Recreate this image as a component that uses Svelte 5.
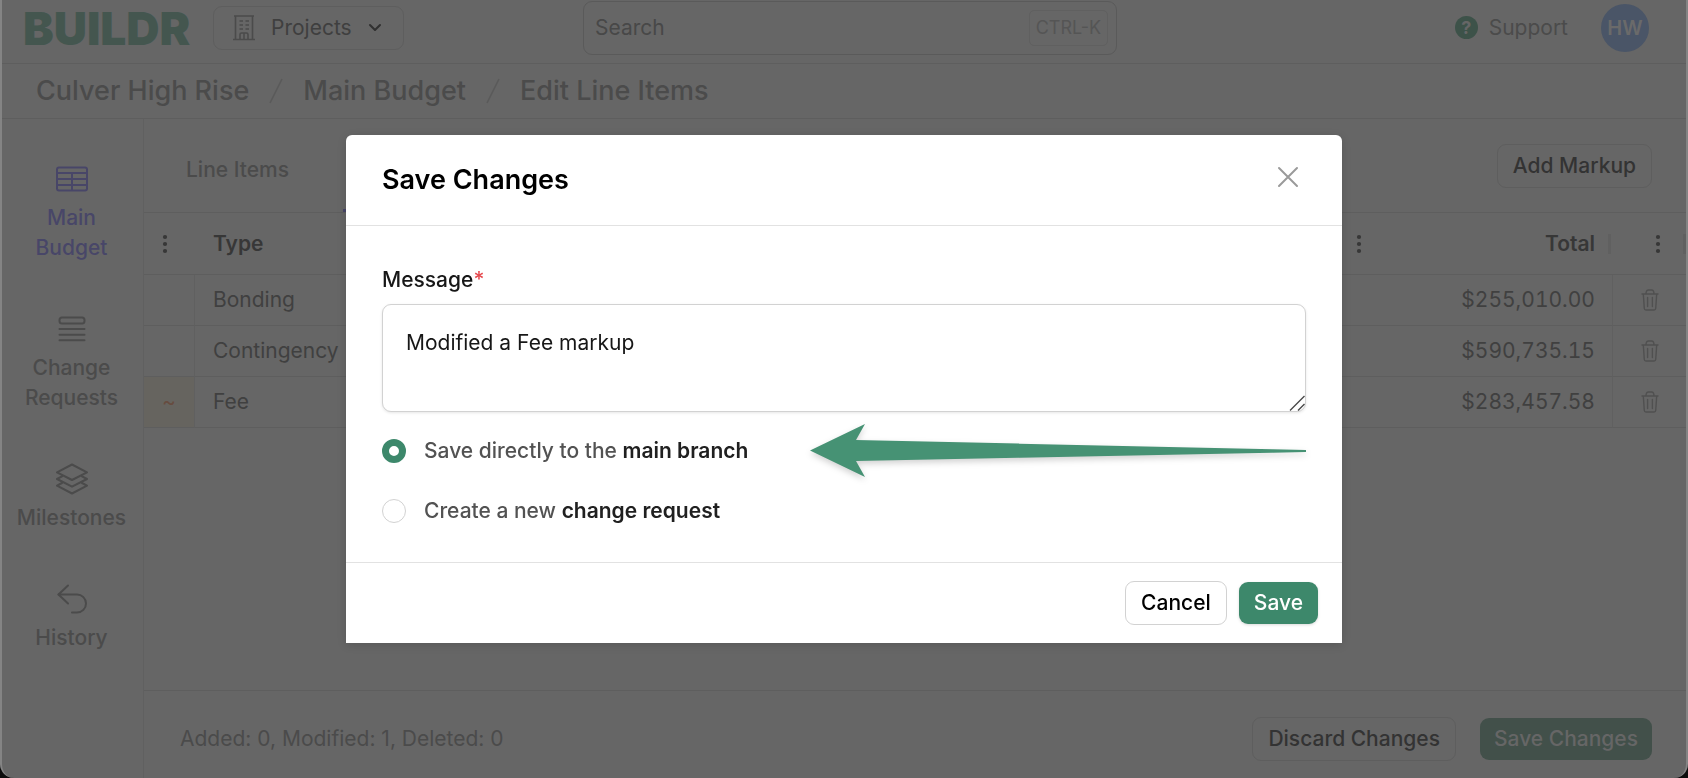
<script>
  let message = $state('Modified a Fee markup');
  let target = $state('main');

  const crumbs = ['Culver High Rise', 'Main Budget', 'Edit Line Items'];
  const rows = [
    { mark: '', type: 'Bonding', total: '$255,010.00' },
    { mark: '', type: 'Contingency', total: '$590,735.15' },
    { mark: '~', type: 'Fee', total: '$283,457.58' }
  ];
</script>

{#snippet dots()}
  <svg class="dots" width="6" height="20" viewBox="0 0 6 20" fill="currentColor" aria-hidden="true">
    <circle cx="3" cy="3" r="2.1" /><circle cx="3" cy="10" r="2.1" /><circle cx="3" cy="17" r="2.1" />
  </svg>
{/snippet}

<div class="page">
  <header>
    <a class="logo" href="#home">BUILDR</a>
    <button class="btn projects">
      <svg width="24" height="26" viewBox="0 0 24 26" fill="none" stroke="#4b4b4b" stroke-width="1.6" aria-hidden="true">
        <path d="M2 1h20M1 24.500h22M3.500 1v23.500M20.500 1v23.500M8 24v-4.500q0-1.500 1.500-1.500h5q1.500 0 1.500 1.500v4.500M12 18v6" />
        <path d="M7.500 6h3.500M13.500 6h3.500M7.500 10h3.500M13.500 10h3.500M7.500 14h3.500M13.500 14h3.500" />
      </svg>
      <span>Projects</span>
      <svg width="14" height="10" viewBox="0 0 14 10" fill="none" stroke="#303030" stroke-width="2" stroke-linecap="round" stroke-linejoin="round" aria-hidden="true">
        <path d="M2 2l5 5 5-5" />
      </svg>
    </button>
    <label class="search">
      <input type="text" placeholder="Search" aria-label="Search" />
      <kbd>CTRL-K</kbd>
    </label>
    <div class="account">
      <a class="support" href="#support">
        <span class="help">?</span>
        Support
      </a>
      <button class="avatar">HW</button>
    </div>
  </header>

  <nav class="crumbs">
    {#each crumbs as crumb, i}
      {#if i > 0}
        <svg width="14" height="26" viewBox="0 0 14 26" fill="none" stroke="#5a5a5a" stroke-width="1.5" aria-hidden="true"><path d="M13 1L1 25" /></svg>
      {/if}
      <a href="#crumb">{crumb}</a>
    {/each}
  </nav>

  <div class="body">
    <nav class="side">
      <a class="current" href="#budget">
        <svg width="32" height="32" viewBox="0 0 32 32" fill="none" stroke="currentColor" stroke-width="2" aria-hidden="true">
          <rect x="1" y="4.500" width="30" height="23" rx="2" />
          <path d="M1 10h30M1 16h30M1 22h30M16 10v17.500" />
        </svg>
        Main Budget
      </a>
      <a href="#requests">
        <svg width="32" height="32" viewBox="0 0 32 32" fill="none" stroke="currentColor" stroke-width="2" stroke-linecap="round" aria-hidden="true">
          <rect x="3.500" y="4.500" width="25" height="6" rx="2.500" />
          <path d="M3.500 16h25M3.500 21.800h25M3.500 27.300h25" />
        </svg>
        Change Requests
      </a>
      <a href="#milestones">
        <svg width="32" height="32" viewBox="0 0 32 32" fill="none" stroke="currentColor" stroke-width="2" stroke-linejoin="round" stroke-linecap="round" aria-hidden="true">
          <path d="M16 1.500L31 9.300 16 17 1 9.300z" />
          <path d="M6 13.300L1 16l15 7.700L31 16l-5-2.700" />
          <path d="M6 20L1 22.700l15 7.800 15-7.800-5-2.700" />
        </svg>
        Milestones
      </a>
      <a href="#history">
        <svg width="32" height="32" viewBox="0 0 32 32" fill="none" stroke="currentColor" stroke-width="2" stroke-linejoin="round" stroke-linecap="round" aria-hidden="true">
          <path d="M12 2.500L2.500 11.500 12 20.500" />
          <path d="M2.500 11.500h18.500a9 9 0 0 1 0 18h-5" />
        </svg>
        History
      </a>
    </nav>

    <main>
      <div class="toolbar">
        <div class="tabs">
          <a href="#lines">Line Items</a>
          <span class="marker"></span>
        </div>
        <button class="btn">Add Markup</button>
      </div>
      <table>
        <thead>
          <tr>
            <th class="mark">{@render dots()}</th>
            <th class="type">Type</th>
            <th class="total"><div>{@render dots()}<span>Total</span></div></th>
            <th class="remove"><div>{@render dots()}</div></th>
          </tr>
        </thead>
        <tbody>
          {#each rows as row}
            <tr>
              <td class="mark" class:changed={row.mark}>{row.mark}</td>
              <td class="type">{row.type}</td>
              <td class="total">{row.total}</td>
              <td class="remove">
                <button aria-label="Delete">
                  <svg width="18" height="22" viewBox="0 0 18 22" fill="none" stroke="#505050" stroke-width="1.400" stroke-linecap="round" stroke-linejoin="round" aria-hidden="true">
                    <path d="M1 5h16M2.300 5l1 14.500q.1 1.500 1.600 1.500h8.200q1.500 0 1.600-1.500l1-14.500M5 5q0-4 2.500-4h3q2.500 0 2.500 4M6.600 8.500v9M11.400 8.500v9" />
                  </svg>
                </button>
              </td>
            </tr>
          {/each}
        </tbody>
      </table>
      <footer>
        <span>Added: 0, Modified: 1, Deleted: 0</span>
        <button class="btn">Discard Changes</button>
        <button class="btn green">Save Changes</button>
      </footer>
    </main>
  </div>
</div>

<div class="layer">
  <form class="dialog" role="dialog" aria-labelledby="dialog-title">
    <div class="head">
      <h2 id="dialog-title">Save Changes</h2>
      <button class="close" type="button" aria-label="Close">
        <svg width="22" height="22" viewBox="0 0 22 22" fill="none" stroke="#9a9a9a" stroke-width="2" stroke-linecap="round" aria-hidden="true">
          <path d="M2 2l18 18M20 2L2 20" />
        </svg>
      </button>
    </div>
    <div class="fields">
      <label class="caption" for="message">Message<span>*</span></label>
      <div class="box">
        <textarea id="message" bind:value={message}></textarea>
        <svg width="16" height="16" viewBox="0 0 16 16" fill="none" stroke="#4a4a4a" stroke-width="1.400" aria-hidden="true">
          <path d="M1 15.500L15.500 1M9 15.500L15.500 9" />
        </svg>
      </div>
      <div class="choice">
        <input type="radio" id="to-main" value="main" bind:group={target} />
        <label for="to-main">Save directly to the <b>main branch</b></label>
        <svg class="arrow" width="496" height="56" viewBox="0 0 496 56" fill="#469274" aria-hidden="true">
          <path d="M0 27.500L55 1 46 17 496 27v2L46 38l9 16z" />
        </svg>
      </div>
      <div class="choice">
        <input type="radio" id="to-request" value="request" bind:group={target} />
        <label for="to-request">Create a new <b>change request</b></label>
      </div>
    </div>
    <div class="actions">
      <button class="btn light" type="button">Cancel</button>
      <button class="btn primary" type="button">Save</button>
    </div>
  </form>
</div>

<style>
  :global(body) {
    margin: 0;
    background: #0c0c0c;
    font-family: Inter, 'Liberation Sans', sans-serif;
    font-size: 21px;
    line-height: 30px;
  }
  * {
    box-sizing: border-box;
  }
  a {
    color: inherit;
    text-decoration: none;
  }
  button,
  input,
  textarea {
    font: inherit;
    color: inherit;
  }
  svg {
    display: block;
    flex: none;
  }
  .page {
    display: flex;
    flex-direction: column;
    min-height: 100vh;
    background: #666;
    border: solid #848484;
    border-width: 0 2px;
    border-radius: 0 0 14px 14px;
    color: #4b4b4b;
  }
  .btn {
    height: 44px;
    padding: 0 15px;
    border: 1px solid #5e5e5e;
    border-radius: 9px;
    background: none;
    color: #333;
    font-weight: 500;
    white-space: nowrap;
  }
  .btn.green {
    height: 42px;
    padding: 0 14px;
    border: 0;
    background: #42504a;
    color: #666;
  }
  header {
    display: flex;
    align-items: center;
    height: 64px;
    padding: 0 37px 8px 21px;
    border-bottom: 1px solid #5e5e5e;
  }
  .logo {
    width: 190px;
    color: #44564f;
    font-size: 46px;
    font-weight: 900;
  }
  .projects {
    display: flex;
    align-items: center;
    gap: 15px;
    width: 191px;
    padding: 0 21px 0 18px;
    color: #3f3f3f;
    font-weight: 400;
  }
  .projects span {
    flex: 1;
    text-align: left;
  }
  .search {
    display: flex;
    align-items: center;
    flex: 0 1 534px;
    height: 54px;
    margin-left: 179px;
    padding: 0 8px 0 11px;
    border: 1px solid #5a5a5a;
    border-radius: 9px;
  }
  .search input {
    flex: 1;
    min-width: 0;
    padding: 0;
    border: 0;
    outline: 0;
    background: none;
  }
  .search input::placeholder {
    color: #484848;
    opacity: 1;
  }
  kbd {
    height: 36px;
    padding: 0 6px;
    border: 1px solid #606060;
    border-radius: 5px;
    color: #555;
    font-family: inherit;
    font-size: 18px;
    line-height: 34px;
  }
  .account {
    display: flex;
    align-items: center;
    gap: 33px;
    margin-left: auto;
  }
  .support {
    display: flex;
    align-items: center;
    gap: 11px;
  }
  .help {
    width: 23px;
    height: 23px;
    border-radius: 50%;
    background: #3d5249;
    color: #666;
    font-size: 18px;
    font-weight: 700;
    line-height: 23px;
    text-align: center;
  }
  .avatar {
    width: 48px;
    height: 48px;
    padding: 0;
    border: 0;
    border-radius: 50%;
    background: #4a5567;
    color: #6a6a6a;
    font-size: 20px;
    font-weight: 600;
  }
  .crumbs {
    display: flex;
    align-items: center;
    gap: 20px;
    height: 55px;
    padding: 0 34px;
    border-bottom: 1px solid #5e5e5e;
    font-size: 27px;
    font-weight: 500;
  }
  .body {
    display: flex;
    flex: 1;
  }
  .side {
    display: flex;
    flex-direction: column;
    gap: 50px;
    width: 142px;
    padding: 44px 13px 44px 11px;
    border-right: 1px solid #606060;
    font-weight: 500;
    text-align: center;
  }
  .side a {
    display: flex;
    flex-direction: column;
    align-items: center;
    gap: 8px;
  }
  .side .current {
    color: #484668;
  }
  main {
    display: flex;
    flex: 1;
    flex-direction: column;
    min-width: 0;
  }
  .toolbar {
    display: flex;
    align-items: center;
    justify-content: space-between;
    height: 94px;
    padding: 0 34px 0 0;
    border-bottom: 1px solid #5e5e5e;
  }
  .tabs {
    display: flex;
    align-self: stretch;
    gap: 12px;
  }
  .tabs a {
    padding: 36px 42px 0 42px;
    font-weight: 500;
  }
  .marker {
    width: 160px;
    border-bottom: 3px solid #484668;
  }
  table {
    width: 100%;
    border-collapse: separate;
    border-spacing: 0;
    table-layout: fixed;
    color: #404040;
  }
  th,
  td {
    padding: 0 18px;
    border-bottom: 1px solid #5e5e5e;
    text-align: left;
  }
  th {
    height: 62px;
    color: #373737;
    font-weight: 600;
  }
  td {
    height: 51px;
    border-right: 1px solid #606060;
  }
  td:last-child {
    border-right: 0;
  }
  .mark {
    width: 51px;
  }
  td.mark {
    padding: 0;
    color: #674c40;
    text-align: center;
  }
  td.changed {
    background: #66645f;
  }
  .total {
    width: 271px;
    text-align: right;
  }
  td.total {
    padding-right: 17px;
    font-variant-numeric: tabular-nums;
  }
  th div {
    display: flex;
    align-items: center;
    justify-content: space-between;
  }
  th.total div,
  th.remove div {
    margin-right: -16px;
    padding-right: 13px;
    border-right: 3px solid #606060;
    line-height: 20px;
  }
  th.total {
    padding-left: 14px;
  }
  .remove {
    width: 73px;
  }
  th.remove div {
    justify-content: flex-end;
    margin-right: -18px;
    padding-right: 22px;
  }
  td.remove {
    padding: 0 26px 0 28px;
  }
  .remove button {
    display: block;
    padding: 0;
    border: 0;
    background: none;
  }
  footer {
    display: flex;
    align-items: center;
    gap: 24px;
    margin-top: auto;
    height: 88px;
    padding: 8px 34px 0 36px;
    border-top: 1px solid #5e5e5e;
  }
  footer span {
    flex: 1;
  }
  .layer {
    position: fixed;
    inset: 0;
    display: flex;
    align-items: flex-start;
    justify-content: center;
    padding: 135px 24px 24px;
  }
  .dialog {
    width: 100%;
    max-width: 996px;
    border-radius: 6px 6px 0 0;
    background: #fff;
    box-shadow: 0 2px 10px rgba(0, 0, 0, 0.14);
  }
  .head {
    display: flex;
    align-items: center;
    justify-content: space-between;
    height: 91px;
    padding: 0 43px 0 36px;
    border-bottom: 1px solid #e2e2e2;
  }
  h2 {
    margin: 0;
    color: #000;
    font-size: 27px;
    font-weight: 600;
  }
  .close {
    padding: 0 0 6px;
    border: 0;
    background: none;
  }
  .fields {
    display: flex;
    flex-direction: column;
    padding: 39px 36px 36px;
  }
  .caption {
    margin-bottom: 9px;
    color: #171717;
    font-weight: 500;
  }
  .caption span {
    color: #e5484d;
  }
  .box {
    position: relative;
    display: flex;
    margin-bottom: 24px;
  }
  .box svg {
    position: absolute;
    right: 1px;
    bottom: 1px;
    pointer-events: none;
  }
  textarea {
    flex: 1;
    height: 108px;
    padding: 23px;
    border: 1px solid #d2d2d2;
    border-radius: 9px;
    outline: 0;
    box-shadow: 0 1px 3px rgba(0, 0, 0, 0.1);
    color: #171717;
    resize: none;
  }
  .choice {
    position: relative;
    display: flex;
    align-items: center;
    gap: 18px;
    color: #525252;
    font-weight: 500;
  }
  .choice + .choice {
    margin-top: 30px;
  }
  .choice input {
    appearance: none;
    width: 24px;
    height: 24px;
    margin: 0;
    border: 1px solid #d2d2d2;
    border-radius: 50%;
    background: #fff;
  }
  .choice input:checked {
    border: 7px solid #3d886b;
  }
  .choice b {
    color: #202020;
    font-weight: 600;
  }
  .arrow {
    position: absolute;
    top: -13px;
    right: 0;
    filter: drop-shadow(0 3px 3px rgba(0, 0, 0, 0.18));
  }
  .actions {
    display: flex;
    align-items: center;
    justify-content: flex-end;
    gap: 12px;
    height: 81px;
    padding: 0 24px;
    border-top: 1px solid #e2e2e2;
  }
  .btn.light {
    border-color: #d2d2d2;
    color: #000;
  }
  .btn.primary {
    height: 42px;
    padding: 0 15px;
    border: 0;
    background: #3d886b;
    box-shadow: 0 1px 3px rgba(0, 0, 0, 0.15);
    color: #fff;
  }
</style>
